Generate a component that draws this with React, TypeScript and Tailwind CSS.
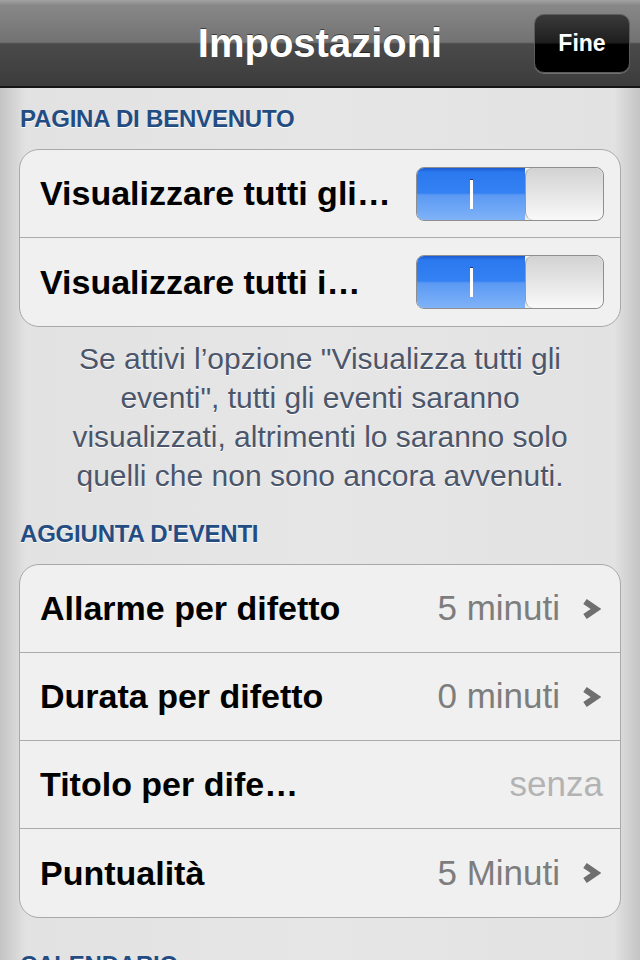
import React from "react";

function Chevron() {
  return (
    <svg width="20" height="22" viewBox="0 0 20 22" className="shrink-0">
      <polyline
        points="4,3.5 15,11 4,18.5"
        fill="none"
        stroke="#6f6f6f"
        strokeWidth="6"
        strokeLinejoin="miter"
      />
    </svg>
  );
}

function Toggle() {
  return (
    <div className="flex h-[54px] w-[188px] overflow-hidden rounded-[8px] border border-[#8f8f8f]">
      <div className="relative flex w-[108px] items-center justify-center bg-[linear-gradient(to_bottom,#1b5bd0_0%,#2c79f0_8%,#3381f2_48%,#5b99f4_52%,#7fb3f8_100%)]">
        <div className="h-[30px] w-[3px] border-t border-[#1a3a7a] bg-white" />
      </div>
      <div className="flex-1 rounded-[8px] border-l border-[#9a9a9a] bg-[linear-gradient(to_bottom,#d2d2d2,#f9f9f9)]" />
    </div>
  );
}

function SectionHeader({ children }: { children: React.ReactNode }) {
  return (
    <div className="pl-[20px] text-[24px] leading-[26px] font-bold tracking-[-0.2px] text-[#234c83] [text-shadow:0_1px_0_#ffffff]">
      {children}
    </div>
  );
}

function Row({
  label,
  value,
  muted,
  chevron,
  last,
}: {
  label: string;
  value: string;
  muted?: boolean;
  chevron?: boolean;
  last?: boolean;
}) {
  return (
    <div
      className={`flex h-[88px] items-center pl-[20px] ${chevron ? "pr-[19px]" : "pr-[17px]"} ${last ? "" : "border-b border-[#ababab]"}`}
    >
      <span className="flex-1 text-[34px] font-bold text-black">{label}</span>
      <span className={`text-[35px] ${muted ? "text-[#b3b3b3]" : "text-[#7d7d7d]"}`}>{value}</span>
      {chevron && (
        <span className="ml-[21px] flex items-center">
          <Chevron />
        </span>
      )}
    </div>
  );
}

export default function App() {
  return (
    <div className="h-[960px] w-[640px] overflow-hidden bg-[#e5e5e5] font-['Liberation_Sans',Arial,sans-serif]">
      <nav className="relative flex h-[88px] items-center justify-center border-b-2 border-[#161616] bg-[linear-gradient(to_bottom,#a3a3a3_0%,#888888_6%,#727272_49%,#4a4a4a_51%,#3c3c3c_100%)]">
        <h1 className="text-[40px] font-bold text-white [text-shadow:0_-1px_0_rgba(0,0,0,0.5)]">
          Impostazioni
        </h1>
        <button className="absolute top-[14px] right-[10px] flex h-[59px] w-[96px] items-center justify-center rounded-[10px] border border-[#5c5c5c] bg-[linear-gradient(to_bottom,#3a3a3a_0%,#1e1e1e_48%,#000000_52%,#000000_100%)] text-[23px] font-bold text-white shadow-[0_1px_0_rgba(255,255,255,0.25)]">
          Fine
        </button>
      </nav>

      <div className="h-[872px] bg-[linear-gradient(to_right,#c4c4c4_0%,#e2e2e2_4%,#e6e6e6_50%,#e2e2e2_96%,#c4c4c4_100%)]">
        <div className="pt-[18px]">
          <SectionHeader>PAGINA DI BENVENUTO</SectionHeader>
        </div>

        <div className="mx-[19px] mt-[17px] rounded-[20px] border border-[#a9a9a9] bg-[#f0f0f0]">
          <div className="flex h-[88px] items-center border-b border-[#ababab] pr-[16px] pl-[20px]">
            <span className="flex-1 text-[34px] font-bold text-black">Visualizzare tutti gli…</span>
            <Toggle />
          </div>
          <div className="flex h-[88px] items-center pr-[16px] pl-[20px]">
            <span className="flex-1 text-[34px] font-bold text-black">Visualizzare tutti i…</span>
            <Toggle />
          </div>
        </div>

        <p className="mt-[12px] px-[20px] text-center text-[30px] leading-[39px] text-[#4c566b] [text-shadow:0_1px_0_#ffffff]">
          Se attivi l’opzione "Visualizza tutti gli
          <br />
          eventi", tutti gli eventi saranno
          <br />
          visualizzati, altrimenti lo saranno solo
          <br />
          quelli che non sono ancora avvenuti.
        </p>

        <div className="mt-[26px]">
          <SectionHeader>AGGIUNTA D'EVENTI</SectionHeader>
        </div>

        <div className="mx-[19px] mt-[17px] rounded-[20px] border border-[#a9a9a9] bg-[#f0f0f0]">
          <Row label="Allarme per difetto" value="5 minuti" chevron />
          <Row label="Durata per difetto" value="0 minuti" chevron />
          <Row label="Titolo per dife…" value="senza" muted />
          <Row label="Puntualità" value="5 Minuti" chevron last />
        </div>

        <div className="mt-[34px]">
          <SectionHeader>CALENDARIO</SectionHeader>
        </div>
      </div>
    </div>
  );
}
